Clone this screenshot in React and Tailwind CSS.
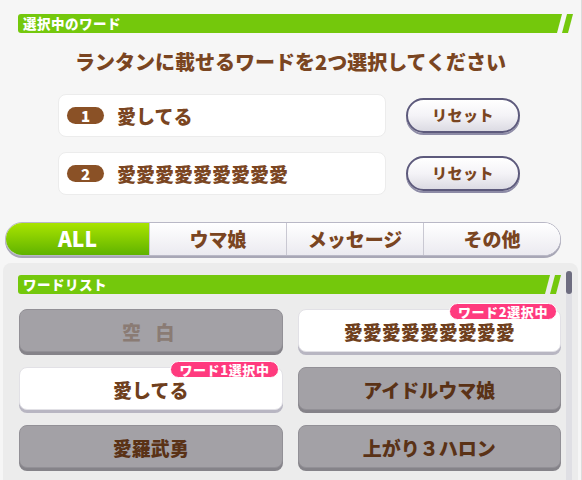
const FONT = "font-['Noto_Sans_CJK_JP','Noto_Sans',sans-serif]";

function GreenHeader({ label, className = "" }) {
  return (
    <div className={`flex items-stretch h-[19px] ${className}`}>
      <div className="flex-1 flex items-center pl-[5px] bg-[#74c80c] rounded-l-[3px] [clip-path:polygon(0_0,100%_0,calc(100%-5px)_100%,0_100%)]">
        <span className="text-white text-[13.5px] font-black leading-none tracking-[0.5px]">
          {label}
        </span>
      </div>
      <svg width="11" height="19" viewBox="0 0 11 19" className="shrink-0">
        <polygon points="5,0 11,0 6,19 0,19" fill="#74c80c" />
      </svg>
    </div>
  );
}

function ResetButton() {
  return (
    <button className="w-[114px] h-[35px] rounded-full border-2 border-[#5d5a7c] bg-gradient-to-b from-white via-[#f4f3f7] to-[#dcdbe3] shadow-[0_2px_0_#8d8ba6] text-[#7a4521] text-[15px] font-black tracking-[0.5px]">
      リセット
    </button>
  );
}

function SelectedRow({ n, word }) {
  return (
    <div className="flex items-center gap-[20px]">
      <div className="w-[328px] h-[43px] bg-white rounded-[8px] border border-[#ececec] flex items-center pl-[8px]">
        <span className="w-[37px] h-[17px] rounded-full bg-[#8a5126] text-white text-[15px] font-black leading-none flex items-center justify-center">
          {n}
        </span>
        <span className="ml-[13px] text-[#7a4521] text-[19px] font-black leading-none">
          {word}
        </span>
      </div>
      <ResetButton />
    </div>
  );
}

const TABS = ["ALL", "ウマ娘", "メッセージ", "その他"];

function Tabs() {
  return (
    <div className="mx-[5px] w-[556px] h-[34px] flex rounded-full border border-[#b9b8c6] shadow-[0_2px_0_#a8a7b6] overflow-hidden bg-white">
      {TABS.map((t, i) =>
        i === 0 ? (
          <div
            key={t}
            className="w-[143px] flex items-center justify-center bg-gradient-to-b from-[#a9e400] to-[#5fb300] text-white text-[21px] font-black"
          >
            {t}
          </div>
        ) : (
          <div
            key={t}
            className="flex-1 flex items-center justify-center border-l border-[#c9c8d2] bg-gradient-to-b from-white to-[#ebeaf0] text-[#7a4521] text-[19px] font-black"
          >
            {t}
          </div>
        )
      )}
    </div>
  );
}

const WORDS = [
  { text: "空 白", kind: "empty" },
  { text: "愛愛愛愛愛愛愛愛愛", kind: "white", badge: "ワード2選択中" },
  { text: "愛してる", kind: "white", badge: "ワード1選択中" },
  { text: "アイドルウマ娘", kind: "gray" },
  { text: "愛羅武勇", kind: "gray" },
  { text: "上がり３ハロン", kind: "gray" },
];

function WordCard({ text, kind, badge }) {
  const base =
    "relative h-[43px] rounded-[8px] flex items-center justify-center pt-[2px] text-[19px] font-black";
  const look =
    kind === "white"
      ? "bg-white border border-[#e2e1e6] shadow-[0_3px_0_#b8b6c2] text-[#6f3f1d]"
      : kind === "empty"
      ? "bg-[#a3a1a6] border border-[#929096] shadow-[0_3px_0_#858389] text-[#8a7b74] tracking-[5px]"
      : "bg-[#a3a1a6] border border-[#929096] shadow-[0_3px_0_#858389] text-[#5a3216]";
  return (
    <div className={`${base} ${look}`}>
      <span className="leading-none">{text}</span>
      {badge && (
        <span className="absolute -top-[7px] right-[3px] h-[17px] px-[8px] rounded-full bg-[#ff3a7e] border border-white text-white text-[13px] font-black leading-none flex items-center tracking-[0.6px]">
          {badge}
        </span>
      )}
    </div>
  );
}

export default function App() {
  return (
    <div className={`${FONT} w-[582px] h-[480px] overflow-hidden bg-[#f6f6f6] border-r border-[#dcdcdc] pt-[14px]`}>
      <GreenHeader label="選択中のワード" className="ml-[18px] mr-[8px]" />

      <p className="mt-[17px] text-center text-[#7a4521] text-[20px] font-black leading-[24px]">
        ランタンに載せるワードを2つ選択してください
      </p>

      <div className="mt-[20px] ml-[58px] flex flex-col gap-[15px]">
        <SelectedRow n="1" word="愛してる" />
        <SelectedRow n="2" word="愛愛愛愛愛愛愛愛愛" />
      </div>

      <div className="mt-[27px]">
        <Tabs />
      </div>

      <div className="mt-[7px] mx-[3px] w-[575px] h-[300px] bg-[#ececec] rounded-t-[8px] flex">
        <div className="flex-1 pl-[15px] pt-[12px]">
          <GreenHeader label="ワードリスト" />
          <div className="mt-[15px] grid grid-cols-2 gap-x-[15px] gap-y-[15px] pl-[1px]">
            {WORDS.map((w) => (
              <WordCard key={w.text} {...w} />
            ))}
          </div>
        </div>
        <div className="ml-[5px] mr-[6px] mt-[8px] w-[6px] bg-[#dfdfe4] rounded-full">
          <div className="h-[23px] bg-[#6e6d80] rounded-full" />
        </div>
      </div>
    </div>
  );
}
